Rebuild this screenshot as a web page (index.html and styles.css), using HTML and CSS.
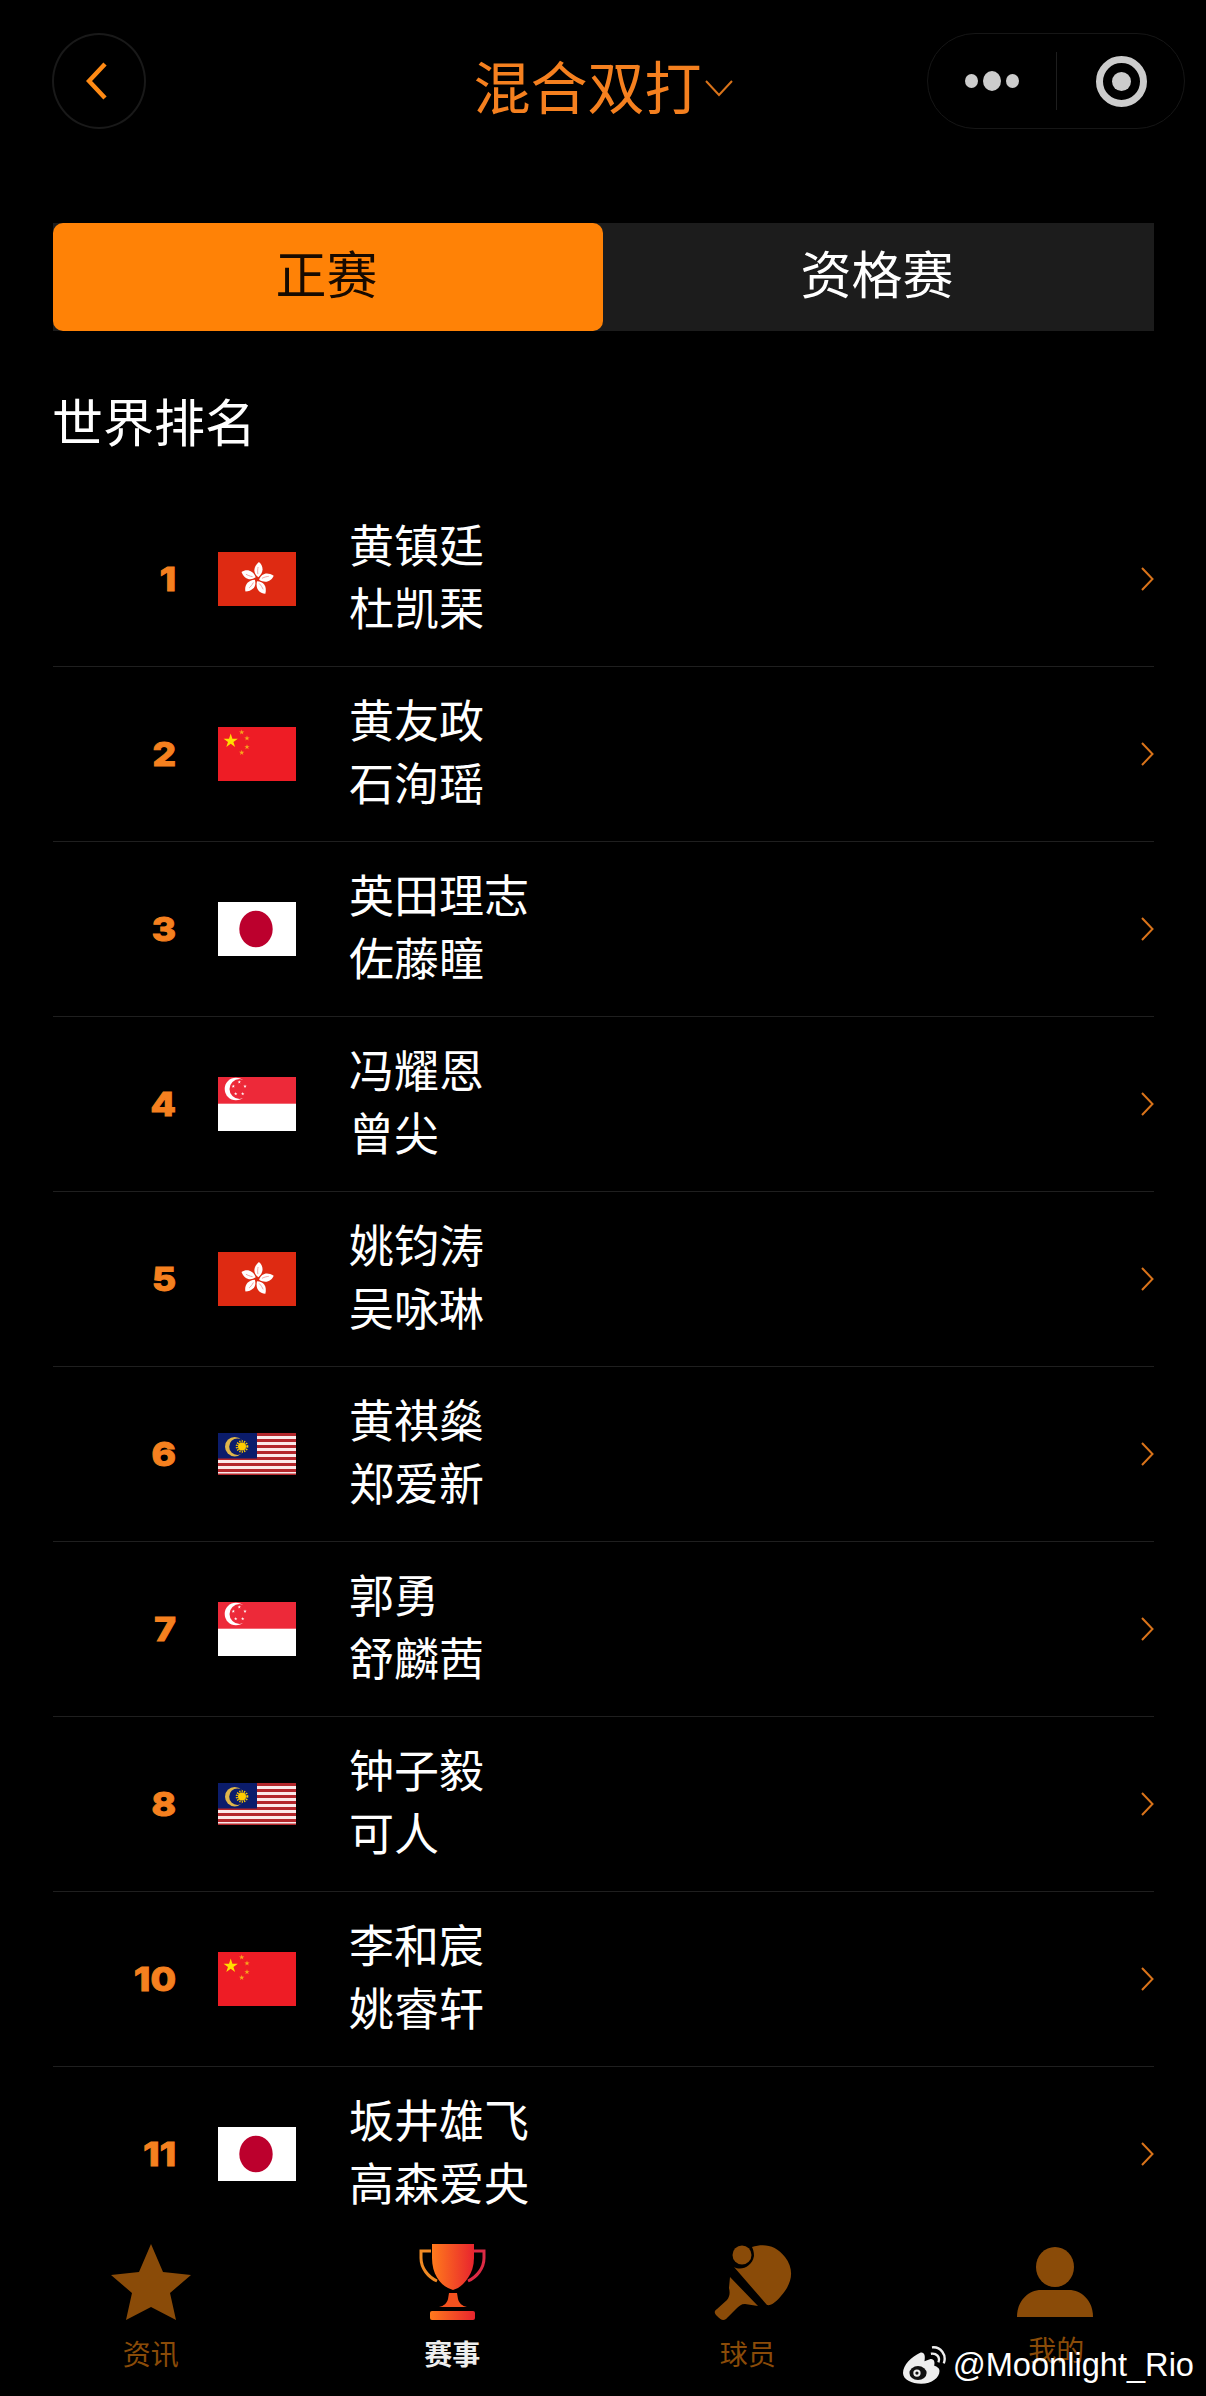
FILE: index.html
```html
<!DOCTYPE html>
<html lang="zh-CN">

<head>
    <meta charset="UTF-8">
    <meta name="viewport" content="width=device-width, initial-scale=1.0">
    <title>混合双打</title>
    <link rel="stylesheet" href="styles.css">
</head>

<body>
    <!-- Shared flags and arrows -->
    <svg class="defs" aria-hidden="true">
        <defs>
            <polygon id="star" points="0,-1 .2245,-.309 .951,-.309 .363,.118 .588,.809 0,.382 -.588,.809 -.363,.118 -.951,-.309 -.2245,-.309"/>
            <g id="petal">
                <path d="M1 -2C-5 -5 -6 -11 -1 -17C4 -14 6 -8 1 -2Z" fill="#fff"/>
                <path d="M0 -5C-1 -8 -1 -10 -1 -12" fill="none" stroke="#e88" stroke-width=".7"/>
            </g>
            <symbol id="flag-hk" viewBox="0 0 78 54">
                <rect width="78" height="54" fill="#de2a12"/>
                <g transform="translate(39 27) rotate(10)">
                    <use href="#petal"/>
                    <use href="#petal" transform="rotate(72)"/>
                    <use href="#petal" transform="rotate(144)"/>
                    <use href="#petal" transform="rotate(216)"/>
                    <use href="#petal" transform="rotate(288)"/>
                </g>
            </symbol>
            <symbol id="flag-cn" viewBox="0 0 78 54">
                <rect width="78" height="54" fill="#ee1c25"/>
                <g fill="#ffde00">
                    <use href="#star" transform="translate(12.7 14) scale(7.5)"/>
                </g>
                <g fill="#f7a81c">
                    <use href="#star" transform="translate(23.7 5.3) scale(2.8)"/>
                    <use href="#star" transform="translate(29 11.3) scale(2.8)"/>
                    <use href="#star" transform="translate(29 20) scale(2.8)"/>
                    <use href="#star" transform="translate(23.7 25.7) scale(2.8)"/>
                </g>
            </symbol>
            <symbol id="flag-jp" viewBox="0 0 78 54">
                <rect width="78" height="54" fill="#fff"/>
                <ellipse cx="38" cy="27" rx="16.7" ry="18.3" fill="#bc002d"/>
            </symbol>
            <symbol id="flag-sg" viewBox="0 0 78 54">
                <rect width="78" height="54" fill="#fff"/>
                <rect width="78" height="26.7" fill="#ed2939"/>
                <circle cx="17.9" cy="12" r="11.2" fill="#fff"/>
                <circle cx="21.5" cy="12" r="10" fill="#ed2939"/>
                <g fill="#fff">
                    <use href="#star" transform="translate(21.3 5) scale(1.8)"/>
                    <use href="#star" transform="translate(15.3 9.3) scale(1.8)"/>
                    <use href="#star" transform="translate(27 9.3) scale(1.8)"/>
                    <use href="#star" transform="translate(17.7 16.7) scale(1.8)"/>
                    <use href="#star" transform="translate(24.7 16.7) scale(1.8)"/>
                </g>
            </symbol>
            <symbol id="flag-my" viewBox="0 0 78 42">
                <rect width="78" height="42" fill="#b3262b"/>
                <g fill="#fbe9e9">
                    <rect y="3" width="78" height="3"/>
                    <rect y="9" width="78" height="3"/>
                    <rect y="15" width="78" height="3"/>
                    <rect y="21" width="78" height="3"/>
                    <rect y="27" width="78" height="3"/>
                    <rect y="33" width="78" height="3"/>
                    <rect y="39" width="78" height="1.5"/>
                </g>
                <rect width="39" height="25.5" fill="#0b1c6b"/>
                <circle cx="16.7" cy="13.7" r="9.7" fill="#e0b64a"/>
                <circle cx="19.5" cy="13.7" r="8.3" fill="#0b1c6b"/>
                <circle cx="24" cy="13.5" r="5.3" fill="none" stroke="#ffcc00" stroke-width="2" stroke-dasharray="1.2 1.2"/>
                <circle cx="24" cy="13.5" r="4" fill="#ffcc00"/>
            </symbol>
            <symbol id="arrow" viewBox="0 0 14 26">
                <path d="M2 2L12.5 13L2 24" fill="none" stroke="#d9731a" stroke-width="2"/>
            </symbol>
        </defs>
    </svg>

    <div class="page">
        <header class="topbar">
            <div class="back-btn">
                <svg width="22" height="38" viewBox="0 0 22 38">
                    <path d="M19 2L3 19L19 36" fill="none" stroke="#ff8a14" stroke-width="4.5"/>
                </svg>
            </div>
            <div class="title">
                <span>混合双打</span>
                <svg class="title-caret" width="28" height="18" viewBox="0 0 28 18">
                    <path d="M1 2L14 16L27 2" fill="none" stroke="#d9731a" stroke-width="2"/>
                </svg>
            </div>
            <div class="capsule">
                <div class="capsule-dots">
                    <i class="dot"></i>
                    <i class="dot dot-big"></i>
                    <i class="dot"></i>
                </div>
                <div class="capsule-line"></div>
                <div class="capsule-ring"><i></i></div>
            </div>
        </header>

        <div class="tabs">
            <div class="tab active">正赛</div>
            <div class="tab">资格赛</div>
        </div>

        <h2 class="section-title">世界排名</h2>

        <main class="list">
            <div class="row">
                <div class="rank">1</div>
                <svg class="flag"><use href="#flag-hk"/></svg>
                <div class="names"><p>黄镇廷</p><p>杜凯琹</p></div>
                <svg class="row-arrow"><use href="#arrow"/></svg>
            </div>
            <div class="row">
                <div class="rank">2</div>
                <svg class="flag"><use href="#flag-cn"/></svg>
                <div class="names"><p>黄友政</p><p>石洵瑶</p></div>
                <svg class="row-arrow"><use href="#arrow"/></svg>
            </div>
            <div class="row">
                <div class="rank">3</div>
                <svg class="flag"><use href="#flag-jp"/></svg>
                <div class="names"><p>英田理志</p><p>佐藤瞳</p></div>
                <svg class="row-arrow"><use href="#arrow"/></svg>
            </div>
            <div class="row">
                <div class="rank">4</div>
                <svg class="flag"><use href="#flag-sg"/></svg>
                <div class="names"><p>冯耀恩</p><p>曾尖</p></div>
                <svg class="row-arrow"><use href="#arrow"/></svg>
            </div>
            <div class="row">
                <div class="rank">5</div>
                <svg class="flag"><use href="#flag-hk"/></svg>
                <div class="names"><p>姚钧涛</p><p>吴咏琳</p></div>
                <svg class="row-arrow"><use href="#arrow"/></svg>
            </div>
            <div class="row">
                <div class="rank">6</div>
                <svg class="flag flag-my"><use href="#flag-my"/></svg>
                <div class="names"><p>黄祺燊</p><p>郑爱新</p></div>
                <svg class="row-arrow"><use href="#arrow"/></svg>
            </div>
            <div class="row">
                <div class="rank">7</div>
                <svg class="flag"><use href="#flag-sg"/></svg>
                <div class="names"><p>郭勇</p><p>舒麟茜</p></div>
                <svg class="row-arrow"><use href="#arrow"/></svg>
            </div>
            <div class="row">
                <div class="rank">8</div>
                <svg class="flag flag-my"><use href="#flag-my"/></svg>
                <div class="names"><p>钟子毅</p><p>可人</p></div>
                <svg class="row-arrow"><use href="#arrow"/></svg>
            </div>
            <div class="row">
                <div class="rank">10</div>
                <svg class="flag"><use href="#flag-cn"/></svg>
                <div class="names"><p>李和宸</p><p>姚睿轩</p></div>
                <svg class="row-arrow"><use href="#arrow"/></svg>
            </div>
            <div class="row">
                <div class="rank">11</div>
                <svg class="flag"><use href="#flag-jp"/></svg>
                <div class="names"><p>坂井雄飞</p><p>高森爱央</p></div>
                <svg class="row-arrow"><use href="#arrow"/></svg>
            </div>
        </main>

        <nav class="tabbar">
            <div class="tabbar-item">
                <svg class="tabbar-icon" viewBox="0 0 80 76">
                    <polygon points="40,0 52,28 80,31 59,49 65,76 40,63 15,76 21,49 0,31 28,28" fill="#8a4b08"/>
                </svg>
                <span>资讯</span>
            </div>
            <div class="tabbar-item current">
                <svg class="tabbar-icon" viewBox="0 0 80 76">
                    <defs>
                        <linearGradient id="cup" x1="0" y1="0" x2="1" y2="0">
                            <stop offset="0" stop-color="#ff7a1c"/>
                            <stop offset="1" stop-color="#e8242e"/>
                        </linearGradient>
                    </defs>
                    <path d="M19 7H9V14C9 24 16 33 25 37" fill="none" stroke="#f08a24" stroke-width="3"/>
                    <path d="M62 7H72V14C72 24 65 33 56 37" fill="none" stroke="#dc2a44" stroke-width="3"/>
                    <path d="M20 0H62V14C62 30 52 40 46 44L41 46L36 44C28 40 20 30 20 14Z" fill="url(#cup)"/>
                    <path d="M37 49H45L46 55C47 59 50 62 55 63H27C32 62 35 59 36 55Z" fill="#f4511e"/>
                    <rect x="18" y="67" width="45" height="9" rx="2" fill="url(#cup)"/>
                </svg>
                <span>赛事</span>
            </div>
            <div class="tabbar-item item-player">
                <svg class="tabbar-icon" viewBox="0 0 80 76">
                    <circle cx="28" cy="11" r="9.5" fill="#8a4b08"/>
                    <path d="M20 23C27 27 38 23 40 12C40 8 39 5 38 3C50 -1 62 1 71 13C81 26 78 40 67 52C62 58 57 62 53 61Z" fill="#8a4b08"/>
                    <path d="M16 33L44 62L31 60C27 60 25 62 22 65L12 75C9 77 7 76 3 72C0 69 0 67 3 65L13 56C16 52 16 48 15 44Z" fill="#8a4b08"/>
                </svg>
                <span>球员</span>
            </div>
            <div class="tabbar-item item-me">
                <svg class="tabbar-icon" viewBox="0 0 80 76">
                    <ellipse cx="40" cy="23" rx="19" ry="20" fill="#8a4b08"/>
                    <path d="M2 73C2 56 14 46 26 46H54C66 46 78 56 78 73Z" fill="#8a4b08"/>
                </svg>
                <span>我的</span>
            </div>
        </nav>

        <!-- Weibo watermark lies over the tab bar -->
        <div class="watermark">
            <svg width="44" height="39" viewBox="0 0 41 36">
                <path d="M16 7C8 11 0 18 0 26C0 32 8 36 17 36C27 36 34 30 34 24C34 21 31 20 29 19C30 16 29 12 25 13L20 15C21 10 20 6 16 7Z" fill="#eee"/>
                <ellipse cx="14" cy="26" rx="8" ry="6.5" fill="#111"/>
                <circle cx="13" cy="26" r="3.4" fill="#eee"/>
                <circle cx="13" cy="26" r="1.5" fill="#111"/>
                <path d="M26 8C31 7 35 11 33 16" fill="none" stroke="#eee" stroke-width="2.2"/>
                <path d="M27 2C35 1 41 9 38 17" fill="none" stroke="#eee" stroke-width="2.2"/>
            </svg>
            <span>@Moonlight_Rio</span>
        </div>
    </div>
</body>

</html>
```

FILE: styles.css
```css
* {
    box-sizing: border-box;
}

html, body {
    margin: 0;
    padding: 0;
    background-color: #000;
}

body {
    font-family: "Noto Sans CJK SC", "Noto Sans", sans-serif;
    color: #fff;
}

.defs {
    position: absolute;
    width: 0;
    height: 0;
}

.page {
    position: relative;
    display: flex;
    flex-direction: column;
    width: 1206px;
    height: 2396px;
    overflow: hidden;
}

/* Top navigation */
.topbar {
    display: grid;
    grid-template-columns: 1fr auto 1fr;
    align-items: center;
    height: 96px;
    margin: 33px 21px 0 52px;
    flex-shrink: 0;
}

.back-btn {
    display: flex;
    align-items: center;
    justify-content: center;
    width: 94px;
    height: 96px;
    padding-right: 4px;
    border: 2px solid #191919;
    border-radius: 50%;
}

.title {
    display: flex;
    align-items: center;
    margin-right: 31px;
    padding-top: 6px;
    font-size: 57px;
    line-height: 70px;
    color: #f5801f;
}

.title-caret {
    margin-left: 3px;
    margin-top: 8px;
}

.capsule {
    justify-self: end;
    display: flex;
    align-items: center;
    width: 258px;
    height: 96px;
    padding-left: 37px;
    border: 1px solid #161616;
    border-radius: 48px;
}

.capsule-dots {
    display: flex;
    align-items: center;
    gap: 5px;
}

.dot {
    width: 13px;
    height: 14px;
    border-radius: 50%;
    background-color: #ccc;
}

.dot-big {
    width: 18px;
    height: 20px;
}

.capsule-line {
    width: 1px;
    height: 58px;
    margin-left: 37px;
    background-color: #1e1e1e;
}

.capsule-ring {
    display: flex;
    align-items: center;
    justify-content: center;
    width: 51px;
    height: 51px;
    margin-left: 39px;
    border: 7px solid #ccc;
    border-radius: 50%;
}

.capsule-ring i {
    width: 19px;
    height: 19px;
    border-radius: 50%;
    background-color: #ccc;
}

/* Main draw / qualifying switch */
.tabs {
    display: flex;
    height: 108px;
    margin: 94px 52px 0 53px;
    flex-shrink: 0;
    background-color: #1c1c1c;
}

.tab {
    flex: 1;
    padding-right: 3px;
    font-size: 51px;
    line-height: 98px;
    text-align: center;
}

.tab.active {
    flex: none;
    width: 550px;
    color: #170a00;
    background-color: #ff8206;
    border-radius: 10px;
}

.section-title {
    margin: 59px 0 42px 52px;
    font-size: 51px;
    font-weight: 400;
    line-height: 60px;
    flex-shrink: 0;
}

/* Ranking list */
.list {
    flex: 1;
    min-height: 0;
    margin: 0 52px 0 53px;
    overflow: hidden;
}

.row {
    display: flex;
    align-items: center;
    height: 175px;
    border-bottom: 1px solid #1f1f1f;
}

.rank {
    width: 123px;
    font-family: Inter, "DejaVu Sans", sans-serif;
    font-size: 33px;
    font-weight: 800;
    text-align: right;
    color: #f5801f;
    -webkit-text-stroke: 1px #f5801f;
    transform: scaleX(1.12);
    transform-origin: right center;
}

.flag {
    width: 78px;
    height: 54px;
    margin-left: 42px;
    flex-shrink: 0;
}

.flag-my {
    height: 42px;
}

.names {
    margin-left: 53px;
    padding-bottom: 8px;
    font-size: 45px;
    line-height: 63px;
}

.names p {
    margin: 0;
}

.row-arrow {
    width: 14px;
    height: 26px;
    margin-left: auto;
}

/* Bottom tab bar */
.tabbar {
    display: flex;
    height: 171px;
    padding-top: 19px;
    flex-shrink: 0;
    background-color: #000;
}

.tabbar-item {
    flex: 1;
    display: flex;
    flex-direction: column;
    align-items: center;
    font-size: 28px;
    line-height: 34px;
    color: #8a4b08;
}

.tabbar-item.current {
    color: #eee;
    font-weight: 700;
}

.tabbar-icon {
    width: 80px;
    height: 76px;
    margin-bottom: 16px;
}

.item-player span {
    margin-right: 12px;
}

.item-me .tabbar-icon {
    margin-bottom: 12px;
}

.item-me span {
    margin-left: 2px;
}

/* Watermark */
.watermark {
    position: absolute;
    right: 12px;
    bottom: 12px;
    display: flex;
    align-items: center;
    gap: 6px;
    font-family: "Liberation Sans", Arial, sans-serif;
    font-size: 32.6px;
    line-height: 38px;
    color: #fff;
}
```
